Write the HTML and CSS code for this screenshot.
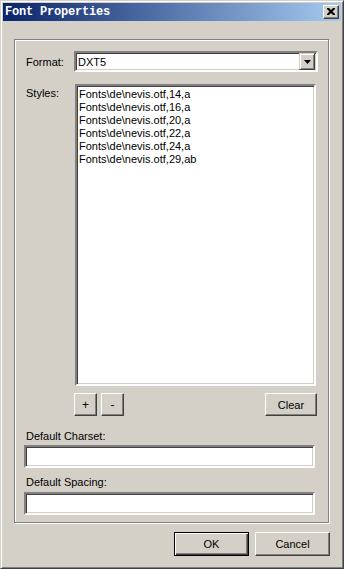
FILE: index.html
```html
<!DOCTYPE html>
<html lang="en">
<head>
	<meta charset="UTF-8">
	<title>Font Properties</title>
	<link rel="stylesheet" href="styles.css">
</head>
<body>
	<div class="window">
		<div class="titlebar">
			<span class="title">Font Properties</span>
			<div class="close">
				<svg width="8" height="7" viewBox="0 0 8 7"><path d="M0 0h2l2 2 2-2h2v1l-2.5 2.5 2.5 2.5v1h-2l-2-2-2 2h-2v-1l2.5-2.5-2.5-2.5z" fill="#000"/></svg>
			</div>
		</div>
		<div class="client">
			<div class="group">
				<div class="row format-row">
					<span class="label">Format:</span>
					<div class="combo">
						<span class="combo-text">DXT5</span>
						<div class="drop"><svg width="7" height="4" viewBox="0 0 7 4"><path d="M0 0h7l-3.5 4z" fill="#000"/></svg></div>
					</div>
				</div>
				<div class="row styles-row">
					<span class="label">Styles:</span>
					<div class="listbox">
						<div>Fonts\de\nevis.otf,14,a</div>
						<div>Fonts\de\nevis.otf,16,a</div>
						<div>Fonts\de\nevis.otf,20,a</div>
						<div>Fonts\de\nevis.otf,22,a</div>
						<div>Fonts\de\nevis.otf,24,a</div>
						<div>Fonts\de\nevis.otf,29,ab</div>
					</div>
				</div>
				<div class="list-buttons">
					<div class="btn small">+</div>
					<div class="btn small minus">-</div>
					<div class="btn clear">Clear</div>
				</div>
				<div class="field-label first">Default Charset:</div>
				<div class="edit"></div>
				<div class="field-label">Default Spacing:</div>
				<div class="edit"></div>
			</div>
			<div class="footer">
				<div class="btn dialog default">OK</div>
				<div class="btn dialog">Cancel</div>
			</div>
		</div>
	</div>
</body>
</html>
```

FILE: styles.css
```css
* {
	margin: 0;
	padding: 0;
	box-sizing: border-box;
}
body {
	background: #d4d0c8;
	font-family: "Liberation Sans", Arial, sans-serif;
	font-size: 11px;
	color: #000;
}
.window {
	width: 344px;
	height: 569px;
	background: #d4d0c8;
	border: 1px solid;
	border-color: #d4d0c8 #404040 #404040 #d4d0c8;
	box-shadow: inset 1px 1px 0 #fff, inset -1px -1px 0 #808080;
	padding: 2px;
	display: flex;
	flex-direction: column;
}
.titlebar {
	height: 18px;
	background: linear-gradient(to right, #0a246a, #a6caf0);
	display: flex;
	align-items: center;
	padding-left: 2px;
	padding-right: 2px;
}
.title {
	flex: 1;
	color: #fff;
	font-family: "Liberation Mono", monospace;
	font-weight: bold;
	font-size: 12px;
	letter-spacing: -0.2px;
}
.close {
	width: 16px;
	height: 14px;
	background: #d4d0c8;
	border: 1px solid;
	border-color: #fff #404040 #404040 #fff;
	box-shadow: inset -1px -1px 0 #808080;
	display: flex;
	align-items: center;
	justify-content: center;
	padding-bottom: 1px;
}
.client {
	padding: 18px 11px 0 11px;
	display: flex;
	flex-direction: column;
}
.group {
	width: 315px;
	height: 484px;
	border: 1px solid #808080;
	box-shadow: inset 1px 1px 0 #fff, 1px 1px 0 #fff;
	padding: 11px 0 0 11px;
	display: flex;
	flex-direction: column;
}
.row {
	display: flex;
}
.label {
	width: 48px;
	flex: none;
}
.format-row {
	align-items: center;
	height: 21px;
}
.combo {
	width: 244px;
	height: 21px;
	background: #fff;
	border: 2px solid;
	border-color: #808080 #fff #fff #808080;
	box-shadow: inset 1px 1px 0 #404040, inset -1px -1px 0 #d4d0c8;
	display: flex;
	align-items: center;
	padding-right: 1px;
}
.combo-text {
	flex: 1;
	padding-left: 2px;
}
.drop {
	width: 16px;
	height: 17px;
	background: #d4d0c8;
	border: 1px solid;
	border-color: #d4d0c8 #404040 #404040 #d4d0c8;
	box-shadow: inset 1px 1px 0 #fff, inset -1px -1px 0 #808080;
	display: flex;
	align-items: center;
	justify-content: center;
}
.styles-row {
	margin-top: 12px;
}
.styles-row .label {
	padding-top: 3px;
}
.listbox {
	width: 241px;
	height: 302px;
	margin-left: 1px;
	background: #fff;
	border: 2px solid;
	border-color: #808080 #fff #fff #808080;
	box-shadow: inset 1px 1px 0 #404040, inset -1px -1px 0 #d4d0c8;
	padding: 2px 0 0 2px;
	line-height: 13px;
}
.btn {
	background: #d4d0c8;
	border: 1px solid;
	border-color: #fff #404040 #404040 #fff;
	box-shadow: inset -1px -1px 0 #808080;
	display: flex;
	align-items: center;
	justify-content: center;
	height: 23px;
}
.list-buttons {
	display: flex;
	margin-top: 7px;
	padding-left: 48px;
}
.small {
	width: 23px;
	font-size: 12px;
}
.minus {
	margin-left: 4px;
}
.clear {
	width: 52px;
	margin-left: auto;
	margin-right: 11px;
}
.field-label {
	margin-top: 5px;
	height: 19px;
	line-height: 19px;
}
.field-label.first {
	margin-top: 12px;
	height: 17px;
	line-height: 17px;
}
.edit {
	width: 291px;
	height: 23px;
	margin-left: -2px;
	background: #fff;
	border: 2px solid;
	border-color: #808080 #fff #fff #808080;
	box-shadow: inset 1px 1px 0 #404040, inset -1px -1px 0 #d4d0c8;
}
.footer {
	display: flex;
	justify-content: flex-end;
	gap: 6px;
	margin-top: 9px;
}
.dialog {
	width: 75px;
	height: 24px;
}
.default {
	border: 1px solid #000;
	box-shadow: inset 1px 1px 0 #fff, inset -1px -1px 0 #404040, inset -2px -2px 0 #808080;
}
```
